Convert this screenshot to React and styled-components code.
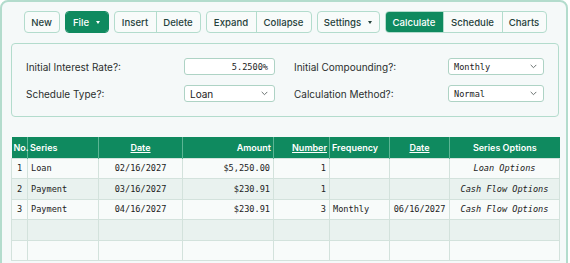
import React from "react";
import styled, { createGlobalStyle, css } from "styled-components";

const GREEN = "#0f8a5f";
const LINE = "#b3dccd";
const MONO = `"DejaVu Sans Mono", "Liberation Mono", monospace`;
const SANS = `Inter, "Noto Sans", sans-serif`;

const GlobalStyle = createGlobalStyle`
  html, body { margin: 0; padding: 0; background: #ffffff; }
  body { font-family: ${SANS}; color: #2a2f2d; }
  * { box-sizing: border-box; }
`;

const Card = styled.div`
  width: 568px;
  min-height: 300px;
  border: 2px solid ${LINE};
  border-radius: 8px;
  background: #f5f9f9;
  padding: 9px 7px 0 9px;
`;

const Toolbar = styled.div`
  display: flex;
  justify-content: center;
  gap: 5px;
  margin-bottom: 10px;
`;

const Group = styled.div`
  display: flex;
  flex-shrink: 0;
  height: 22px;
  border: 1px solid ${(p) => (p.$solid ? GREEN : LINE)};
  border-radius: 4px;
  overflow: hidden;
  background: #f8fbfa;
`;

const Btn = styled.button`
  display: flex;
  align-items: center;
  justify-content: center;
  gap: 5px;
  flex-shrink: 0;
  width: ${(p) => p.$w}px;
  height: 100%;
  margin: 0;
  padding: 0;
  border: none;
  border-left: 1px solid ${LINE};
  font-family: ${SANS};
  font-size: 9.6px;
  font-weight: 500;
  color: #25413a;
  background: transparent;
  &:first-child { border-left: none; }
  ${(p) =>
    p.$active &&
    css`
      background: ${GREEN};
      color: #ffffff;
    `}
`;

const Caret = styled.span`
  width: 0;
  height: 0;
  border-left: 2.5px solid transparent;
  border-right: 2.5px solid transparent;
  border-top: 3px solid currentColor;
  margin-left: 2px;
`;

const Panel = styled.div`
  border: 1px solid ${LINE};
  border-radius: 4px;
  padding: 14px;
  display: grid;
  grid-template-columns: 249px 250px;
  column-gap: 19px;
  row-gap: 10px;
`;

const Field = styled.div`
  display: flex;
  align-items: center;
  justify-content: space-between;
  height: 17px;
`;

const Label = styled.span`
  font-size: 10px;
  color: #2b2f2e;
`;

const Control = styled.div`
  width: ${(p) => p.$w}px;
  height: 17px;
  border: 1px solid #aed3c5;
  border-radius: 3px;
  background: #ffffff;
  display: flex;
  align-items: center;
  justify-content: ${(p) => (p.$right ? "flex-end" : "space-between")};
  padding: 0 6px 0 5px;
  font-family: ${(p) => (p.$mono ? MONO : SANS)};
  font-size: ${(p) => (p.$mono ? "8.6px" : "10px")};
  font-weight: ${(p) => (p.$mono ? 500 : 400)};
  color: #222;
`;

const Chevron = () => (
  <svg width="7" height="5" viewBox="0 0 7 5">
    <path d="M0.7 0.9 L3.5 3.7 L6.3 0.9" fill="none" stroke="#6b7271" strokeWidth="1" />
  </svg>
);

const Table = styled.table`
  margin-top: 20px;
  width: 548px;
  border-collapse: collapse;
  table-layout: fixed;
`;

const Th = styled.th`
  height: 21px;
  padding: 0 2px;
  background: ${GREEN};
  color: #ffffff;
  font-family: ${SANS};
  font-size: 9px;
  font-weight: 600;
  text-align: ${(p) => p.$align || "left"};
  border-left: 1px solid #5bb594;
  white-space: nowrap;
  text-decoration: ${(p) => (p.$link ? "underline" : "none")};
  &:first-child { border-left: none; }
`;

const Tr = styled.tr`
  height: 20.6px;
  background: ${(p) => (p.$alt ? "#e9f2ef" : "#f8fbfa")};
`;

const Td = styled.td`
  padding: 0 ${(p) => p.$pad ?? 3}px;
  border: 1px solid #d3e2dc;
  font-family: ${MONO};
  font-size: 8.6px;
  color: #222;
  text-align: ${(p) => p.$align || "left"};
  font-style: ${(p) => (p.$italic ? "italic" : "normal")};
  white-space: nowrap;
  overflow: hidden;
`;

const cols = [
  { w: 16, label: "No.", align: "left" },
  { w: 71, label: "Series", align: "left" },
  { w: 84, label: "Date", align: "center", link: true },
  { w: 91, label: "Amount", align: "right" },
  { w: 56, label: "Number", align: "right", link: true },
  { w: 60, label: "Frequency", align: "left" },
  { w: 60, label: "Date", align: "center", link: true },
  { w: 110, label: "Series Options", align: "center" },
];

const rows = [
  ["1", "Loan", "02/16/2027", "$5,250.00", "1", "", "", "Loan Options"],
  ["2", "Payment", "03/16/2027", "$230.91", "1", "", "", "Cash Flow Options"],
  ["3", "Payment", "04/16/2027", "$230.91", "3", "Monthly", "06/16/2027", "Cash Flow Options"],
  ["", "", "", "", "", "", "", ""],
  ["", "", "", "", "", "", "", ""],
];

export default function App() {
  return (
    <>
      <GlobalStyle />
      <Card>
        <Toolbar>
          <Group><Btn $w={34}>New</Btn></Group>
          <Group $solid>
            <Btn $active $w={42}>File <Caret /></Btn>
          </Group>
          <Group>
            <Btn $w={41}>Insert</Btn>
            <Btn $w={44}>Delete</Btn>
          </Group>
          <Group>
            <Btn $w={49}>Expand</Btn>
            <Btn $w={55}>Collapse</Btn>
          </Group>
          <Group><Btn $w={61}>Settings <Caret /></Btn></Group>
          <Group>
            <Btn $active $w={57}>Calculate</Btn>
            <Btn $w={59}>Schedule</Btn>
            <Btn $w={44}>Charts</Btn>
          </Group>
        </Toolbar>

        <Panel>
          <Field>
            <Label>Initial Interest Rate?:</Label>
            <Control $w={91} $mono $right>5.2500%</Control>
          </Field>
          <Field>
            <Label>Initial Compounding?:</Label>
            <Control $w={96} $mono>Monthly<Chevron /></Control>
          </Field>
          <Field>
            <Label>Schedule Type?:</Label>
            <Control $w={91}>Loan<Chevron /></Control>
          </Field>
          <Field>
            <Label>Calculation Method?:</Label>
            <Control $w={96} $mono>Normal<Chevron /></Control>
          </Field>
        </Panel>

        <Table>
          <colgroup>
            {cols.map((c, i) => (
              <col key={i} style={{ width: c.w }} />
            ))}
          </colgroup>
          <thead>
            <tr>
              {cols.map((c, i) => (
                <Th key={i} $align={c.align} $link={c.link}>{c.label}</Th>
              ))}
            </tr>
          </thead>
          <tbody>
            {rows.map((r, ri) => (
              <Tr key={ri} $alt={ri % 2 === 1}>
                {r.map((v, ci) => (
                  <Td
                    key={ci}
                    $align={cols[ci].align}
                    $pad={ci === 0 ? 5 : 3}
                    $italic={ci === 7}
                  >
                    {v}
                  </Td>
                ))}
              </Tr>
            ))}
          </tbody>
        </Table>
      </Card>
    </>
  );
}
